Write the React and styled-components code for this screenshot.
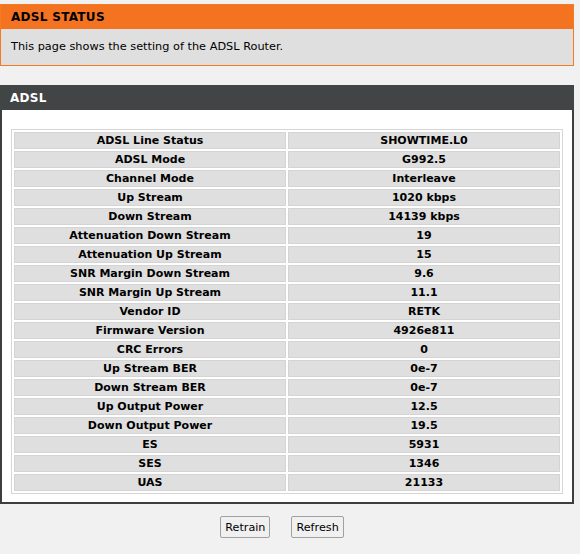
import React from 'react'
import styled, { createGlobalStyle } from 'styled-components'

const GlobalStyle = createGlobalStyle`
  body {
    margin: 0;
    background: #f1f1f1;
    font-family: "DejaVu Sans", Tahoma, sans-serif;
  }
`

const Page = styled.div`
  width: 574px;
  padding-top: 4px;
`

const StatusBox = styled.div`
  border: 1px solid #f47b20;
  background: #dfdfdf;
`

const StatusTitle = styled.div`
  background: #f47321;
  height: 24px;
  line-height: 25px;
  padding-left: 10px;
  font-size: 12px;
  font-weight: bold;
  color: #000;
  letter-spacing: 0.3px;
`

const StatusText = styled.div`
  height: 36px;
  line-height: 36px;
  padding-left: 10px;
  font-size: 11.3px;
  color: #000;
`

const Panel = styled.div`
  margin-top: 19px;
  border: 2px solid #3c3f3f;
  border-top: none;
  background: #fff;
`

const PanelHead = styled.div`
  background: #414545;
  height: 25px;
  line-height: 26px;
  padding-left: 10px;
  margin: 0 -2px;
  font-size: 12px;
  font-weight: bold;
  color: #fff;
  letter-spacing: 0.3px;
`

const PanelBody = styled.div`
  padding: 19px 9px 8px 9px;
`

const Table = styled.table`
  width: 100%;
  border: 1px solid #d6d6d6;
  border-collapse: separate;
  border-spacing: 2px;
  background: #fff;
`

const Cell = styled.td`
  background: #dfdfdf;
  border: 1px solid #d4d4d4;
  height: 15px;
  padding: 0;
  text-align: center;
  font-size: 11px;
  font-weight: bold;
  color: #000;
  line-height: 15px;
  width: 50%;
`

const Buttons = styled.div`
  display: flex;
  justify-content: center;
  gap: 21px;
  padding: 12px 10px 0 0;
`

const Button = styled.button`
  height: 22px;
  padding: 0 4px;
  background: #f0f0f0;
  border: 1px solid #a0a0a0;
  border-radius: 2px;
  font-family: "DejaVu Sans", Tahoma, sans-serif;
  font-size: 11.2px;
  color: #000;
`

const rows = [
  ['ADSL Line Status', 'SHOWTIME.L0'],
  ['ADSL Mode', 'G992.5'],
  ['Channel Mode', 'Interleave'],
  ['Up Stream', '1020 kbps'],
  ['Down Stream', '14139 kbps'],
  ['Attenuation Down Stream', '19'],
  ['Attenuation Up Stream', '15'],
  ['SNR Margin Down Stream', '9.6'],
  ['SNR Margin Up Stream', '11.1'],
  ['Vendor ID', 'RETK'],
  ['Firmware Version', '4926e811'],
  ['CRC Errors', '0'],
  ['Up Stream BER', '0e-7'],
  ['Down Stream BER', '0e-7'],
  ['Up Output Power', '12.5'],
  ['Down Output Power', '19.5'],
  ['ES', '5931'],
  ['SES', '1346'],
  ['UAS', '21133'],
]

export default function App() {
  return (
    <>
      <GlobalStyle />
      <Page>
        <StatusBox>
          <StatusTitle>ADSL STATUS</StatusTitle>
          <StatusText>This page shows the setting of the ADSL Router.</StatusText>
        </StatusBox>
        <Panel>
          <PanelHead>ADSL</PanelHead>
          <PanelBody>
            <Table>
              <tbody>
                {rows.map(([label, value]) => (
                  <tr key={label}>
                    <Cell>{label}</Cell>
                    <Cell>{value}</Cell>
                  </tr>
                ))}
              </tbody>
            </Table>
          </PanelBody>
        </Panel>
        <Buttons>
          <Button>Retrain</Button>
          <Button>Refresh</Button>
        </Buttons>
      </Page>
    </>
  )
}
